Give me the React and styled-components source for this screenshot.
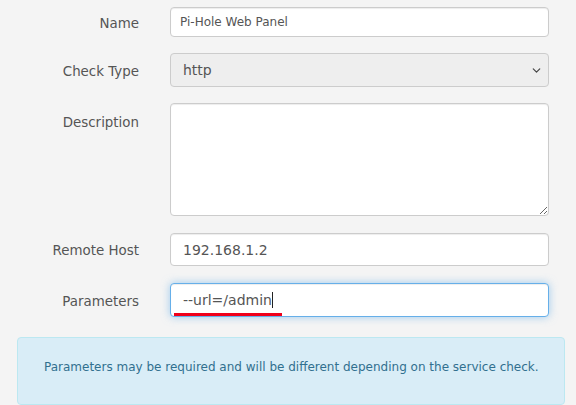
import React from "react";
import styled, { createGlobalStyle } from "styled-components";
import { ChevronDown } from "lucide-react";

const Global = createGlobalStyle`
  html, body {
    margin: 0;
    padding: 0;
    background: #f4f4f4;
    font-family: "DejaVu Sans", Verdana, sans-serif;
    overflow: hidden;
  }
  * { box-sizing: border-box; }
`;

export default function App() {
  const paramRef = React.useRef(null);
  React.useEffect(() => {
    const el = paramRef.current;
    if (el) {
      el.focus();
      el.setSelectionRange(el.value.length, el.value.length);
    }
  }, []);

  return (
    <>
      <Global />
      <Form>
        <Row gap={16}>
          <Label>Name</Label>
          <Input small h={30} defaultValue="Pi-Hole Web Panel" />
        </Row>
        <Row gap={16}>
          <Label>Check Type</Label>
          <Field>
            <Select defaultValue="http">
              <option value="http">http</option>
              <option value="ping">ping</option>
              <option value="tcp">tcp</option>
            </Select>
            <Chevron>
              <ChevronDown size={13} strokeWidth={2.2} />
            </Chevron>
          </Field>
        </Row>
        <Row gap={17} top>
          <Label pad={10}>Description</Label>
          <TextArea />
        </Row>
        <Row gap={17}>
          <Label>Remote Host</Label>
          <Input h={33} defaultValue="192.168.1.2" />
        </Row>
        <Row gap={20}>
          <Label>Parameters</Label>
          <Field>
            <Input focused h={34} ref={paramRef} defaultValue="--url=/admin" />
            <Caret />
            <Mark />
          </Field>
        </Row>
        <Info>Parameters may be required and will be different depending on the service check.</Info>
      </Form>
    </>
  );
}

const Form = styled.div`
  padding: 7px 27px 0 17px;
`;

const Row = styled.div`
  display: grid;
  grid-template-columns: 122px 1fr;
  column-gap: 31px;
  align-items: ${(p) => (p.top ? "start" : "center")};
  margin-bottom: ${(p) => p.gap}px;
`;

const Label = styled.label`
  text-align: right;
  font-size: 13.4px;
  color: #555;
  padding-top: ${(p) => (p.pad || 0) + 2}px;
`;

const Field = styled.div`
  position: relative;
`;

const Input = styled.input`
  display: block;
  width: 100%;
  height: ${(p) => p.h}px;
  padding: 0 ${(p) => (p.small ? 9 : 12)}px;
  font-family: "DejaVu Sans", Verdana, sans-serif;
  font-size: ${(p) => (p.small ? 12 : 14)}px;
  color: #555;
  background: #fff;
  border: 1px solid ${(p) => (p.focused ? "#66afe9" : "#ccc")};
  border-radius: 4px;
  outline: none;
  caret-color: transparent;
  box-shadow: ${(p) =>
    p.focused
      ? "inset 0 1px 1px rgba(0,0,0,.075), 0 0 8px rgba(102,175,233,.6)"
      : "inset 0 1px 1px rgba(0,0,0,.075)"};
`;

const Select = styled.select`
  display: block;
  width: 100%;
  height: 34px;
  padding: 0 12px;
  font-family: "DejaVu Sans", Verdana, sans-serif;
  font-size: 14px;
  color: #555;
  background: #eee;
  border: 1px solid #ccc;
  border-radius: 4px;
  appearance: none;
  outline: none;
`;

const Chevron = styled.span`
  position: absolute;
  right: 6px;
  top: 11px;
  color: #444;
  display: flex;
  pointer-events: none;
`;

const TextArea = styled.textarea`
  display: block;
  width: 100%;
  height: 113px;
  padding: 6px 12px;
  font-family: "DejaVu Sans", Verdana, sans-serif;
  font-size: 14px;
  color: #555;
  background: #fff;
  border: 1px solid #ccc;
  border-radius: 4px;
  outline: none;
  box-shadow: inset 0 1px 1px rgba(0,0,0,.075);
`;

const Caret = styled.span`
  position: absolute;
  left: 102px;
  top: 9px;
  width: 1px;
  height: 16px;
  background: #222;
  pointer-events: none;
`;

const Mark = styled.span`
  position: absolute;
  left: 4px;
  bottom: 1px;
  width: 108px;
  height: 3px;
  background: #f0001a;
  pointer-events: none;
`;

const Info = styled.div`
  height: 68px;
  padding: 21px 10px 0 26px;
  font-size: 12px;
  line-height: 17px;
  color: #31708f;
  background: #d9edf7;
  border: 1px solid #bce8f1;
  border-radius: 4px;
  margin-right: -16px;
`;
